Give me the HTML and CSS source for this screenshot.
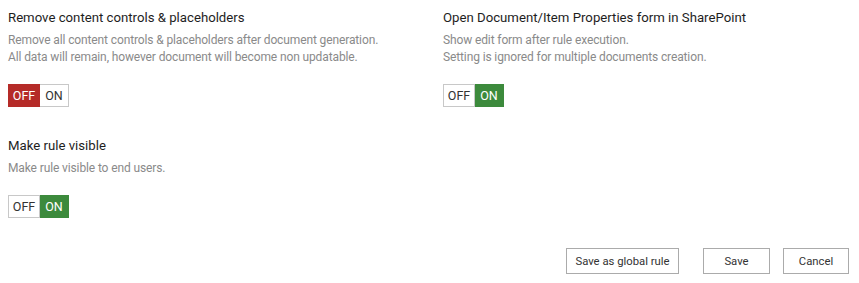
FILE: index.html
```html
<!DOCTYPE html>
<html lang="en">
<head>
  <meta charset="UTF-8" />
  <title>Rule settings</title>
  <link rel="stylesheet" href="styles.css">
</head>
<body>
  <div class="settings">
    <div class="setting">
      <div class="setting-title">Remove content controls &amp; placeholders</div>
      <div class="setting-desc">Remove all content controls &amp; placeholders after document generation.<br>All data will remain, however document will become non updatable.</div>
      <div class="toggle">
        <span class="off active-off">OFF</span><span class="on">ON</span>
      </div>
    </div>
    <div class="setting">
      <div class="setting-title">Open Document/Item Properties form in SharePoint</div>
      <div class="setting-desc">Show edit form after rule execution.<br>Setting is ignored for multiple documents creation.</div>
      <div class="toggle">
        <span class="off">OFF</span><span class="on active-on">ON</span>
      </div>
    </div>
    <div class="setting">
      <div class="setting-title">Make rule visible</div>
      <div class="setting-desc">Make rule visible to end users.</div>
      <div class="toggle">
        <span class="off">OFF</span><span class="on active-on">ON</span>
      </div>
    </div>
  </div>

  <div class="actions">
    <button class="btn btn-global">Save as global rule</button>
    <button class="btn btn-save">Save</button>
    <button class="btn btn-cancel">Cancel</button>
  </div>
</body>
</html>
```

FILE: styles.css
```css
* {
  margin: 0;
  padding: 0;
  box-sizing: border-box;
}
body {
  font-family: Roboto, "Open Sans", sans-serif;
  background: #fff;
  color: #222;
  padding: 9px 10px 0 8px;
}
.settings {
  display: grid;
  grid-template-columns: 435px 1fr;
  row-gap: 30px;
}
.setting-title {
  font-size: 13.2px;
  line-height: 18px;
  color: #1e1e1e;
}
.setting-desc {
  margin-top: 5px;
  font-size: 12px;
  letter-spacing: -0.12px;
  line-height: 17px;
  color: #8a8a8a;
}
.toggle {
  display: flex;
  margin-top: 18px;
  height: 23px;
}
.toggle span {
  font-size: 12.5px;
  line-height: 21px;
  color: #333;
  background: #fff;
  text-align: center;
  border: 1px solid #c8c8c8;
}
.toggle .off {
  width: 32px;
}
.toggle .on {
  width: 29px;
  border-left: none;
}
.toggle .active-off {
  background: #b52b28;
  border-color: #b52b28;
  color: #fff;
}
.toggle .active-on {
  background: #3c8a3c;
  border-color: #3c8a3c;
  color: #fff;
}
.actions {
  display: flex;
  justify-content: flex-end;
  margin-top: 30px;
}
.btn {
  font-family: inherit;
  font-size: 11.3px;
  height: 26px;
  color: #333;
  background: #fff;
  border: 1px solid #ababab;
  cursor: pointer;
}
.btn-global {
  width: 113px;
}
.btn-save {
  width: 67px;
  margin-left: 24px;
}
.btn-cancel {
  width: 66px;
  margin-left: 13px;
}
```
